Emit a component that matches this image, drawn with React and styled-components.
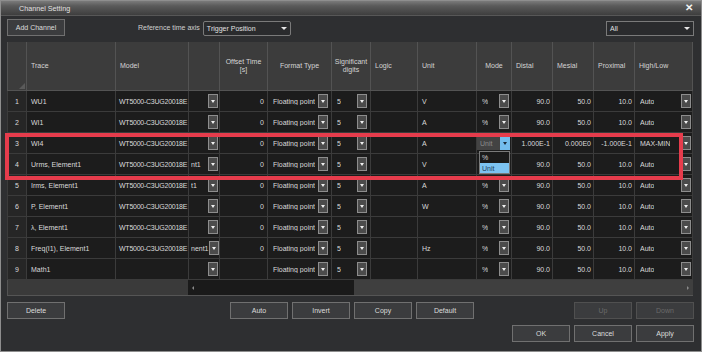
import React from 'react';
import styled, { createGlobalStyle } from 'styled-components';

const Global = createGlobalStyle`
  html, body { margin: 0; padding: 0; background: #2e2f31; }
  body { font-family: "Liberation Sans", Arial, sans-serif; }
  * { box-sizing: border-box; }
`;

const Window = styled.div`
  position: relative;
  width: 702px;
  height: 352px;
  border: 1px solid #8e8e8e;
  background: #2e2f31;
  color: #d9d9d9;
  font-size: 7px;
  display: flex;
  flex-direction: column;
  overflow: hidden;
`;

const TitleBar = styled.div`
  height: 15px;
  border-bottom: 1px solid #575757;
  background: linear-gradient(#7a7a7a, #5a5a5a 35%, #3e3e3e);
  display: flex;
  align-items: center;
  padding: 0 8px 0 18px;
  font-size: 7.2px;
  color: #e2e2e2;
`;

const Title = styled.span`
  flex: 1;
`;

const Close = styled.span`
  font-size: 10px;
  font-weight: bold;
  color: #f2f2f2;
  line-height: 1;
`;

const Toolbar = styled.div`
  height: 26px;
  display: flex;
  align-items: flex-start;
  padding: 3px 7px 0 6px;
`;

const Button = styled.button`
  width: 58px;
  height: 17px;
  padding: 0;
  margin: 0;
  font-family: inherit;
  font-size: 7px;
  background: #3b3c3e;
  color: ${p => (p.disabled ? '#6a6a6a' : '#dcdcdc')};
  border: 1px solid ${p => (p.disabled ? '#505050' : '#707070')};
  margin-left: ${p => p.$ml || 0}px;
`;

const Label = styled.span`
  margin-left: ${p => p.$ml || 0}px;
  height: 17px;
  display: flex;
  align-items: center;
  margin-right: 3px;
  color: #cfcfcf;
`;

const Select = styled.div`
  width: 88px;
  height: 15px;
  margin-top: 2px;
  margin-left: ${p => (p.$auto ? 'auto' : '0')};
  border: 1px solid #7a7a7a;
  border-radius: ${p => p.$r || 0}px;
  background: #2a2b2d;
  display: flex;
  align-items: center;
  justify-content: space-between;
  padding: 0 3px 0 3px;
  color: #e0e0e0;
`;

const Caret = styled.span`
  width: 0;
  height: 0;
  border-left: 3px solid transparent;
  border-right: 3px solid transparent;
  border-top: 3.5px solid ${p => p.$c || '#e8e8e8'};
`;

const Body = styled.div`
  padding: 0 7px 0 6px;
  display: flex;
  flex-direction: column;
`;

const Table = styled.div`
  width: 686px;
  border-bottom: 1px solid #555;
`;

const COLS = '20px 89px 73px 31px 48px 64px 39px 47px 59px 35px 41px 41px 41px 58px';

const HeaderRow = styled.div`
  display: grid;
  grid-template-columns: ${COLS};
  height: 49px;
`;

const HCell = styled.div`
  position: relative;
  background: #3c3c3c;
  border-right: 1px solid #535353;
  border-bottom: 1px solid #535353;
  border-left: ${p => (p.$first ? '1px solid #535353' : 'none')};
  display: flex;
  align-items: center;
  justify-content: ${p => (p.$center ? 'center' : 'flex-start')};
  text-align: ${p => (p.$center ? 'center' : 'left')};
  padding-left: ${p => (p.$center ? 0 : 4)}px;
  line-height: 8.5px;
  color: #d4d4d4;
  white-space: pre;
`;

const Corner = styled.svg`
  position: absolute;
  right: 1px;
  bottom: 1px;
`;

const Row = styled.div`
  display: grid;
  grid-template-columns: ${COLS};
  height: 21px;
`;

const Cell = styled.div`
  background: ${p => (p.$num ? '#262626' : '#1c1c1c')};
  border-right: 1px solid #3b3b3b;
  border-bottom: 1px solid #3b3b3b;
  border-left: ${p => (p.$num ? '1px solid #3b3b3b' : 'none')};
  display: flex;
  align-items: center;
  justify-content: ${p =>
    p.$align === 'right' ? 'flex-end' : p.$align === 'center' ? 'center' : 'flex-start'};
  padding: 0 ${p => (p.$pr != null ? p.$pr : 3)}px 0 ${p => (p.$pl != null ? p.$pl : 4)}px;
  white-space: nowrap;
  overflow: hidden;
  color: #dadada;
  letter-spacing: ${p => (p.$tight ? '-0.25px' : 'normal')};
`;

const CellText = styled.span`
  flex: ${p => (p.$grow ? 1 : 'none')};
  overflow: hidden;
`;

const DropBtn = styled.span`
  flex: none;
  width: 10px;
  height: 14px;
  background: ${p => (p.$active ? '#74bdee' : '#4b4b4b')};
  border: 1px solid ${p => (p.$active ? '#74bdee' : '#8d8d8d')};
  display: flex;
  align-items: center;
  justify-content: center;
  margin-left: auto;
`;

const BtnCaret = styled.span`
  width: 0;
  height: 0;
  border-left: 2.5px solid transparent;
  border-right: 2.5px solid transparent;
  border-top: 3px solid ${p => p.$c || '#f0f0f0'};
`;

const OpenSelect = styled.div`
  flex: 1;
  height: 14px;
  display: flex;
  background: #434343;
  align-items: center;
`;

const OpenSelectText = styled.span`
  flex: 1;
  padding-left: 3px;
  color: #8c8c8c;
`;

const Scrollbar = styled.div`
  display: flex;
  height: 15px;
`;

const Frozen = styled.div`
  width: 181px;
  background: #3a3a3a;
  border-left: 1px solid #535353;
`;

const Track = styled.div`
  flex: 1;
  display: flex;
  align-items: center;
  background: #1a1a1a;
`;

const ArrowBtn = styled.div`
  width: 10px;
  height: 15px;
  display: flex;
  align-items: center;
  justify-content: center;
  background: ${p => (p.$light ? '#3f3f3f' : '#1a1a1a')};
`;

const ArrowTri = styled.span`
  width: 0;
  height: 0;
  border-top: 2px solid transparent;
  border-bottom: 2px solid transparent;
  ${p =>
    p.$dir === 'left'
      ? 'border-right: 2.5px solid #8a8a8a;'
      : 'border-left: 2.5px solid #8a8a8a;'}
`;

const Thumb = styled.div`
  height: 15px;
  margin-left: 156px;
  flex: 1;
  background: #3f3f3f;
`;

const ButtonRow = styled.div`
  display: flex;
  align-items: center;
  margin-top: 6px;
`;

const Group = styled.div`
  display: flex;
  gap: ${p => p.$gap || 4}px;
  margin-left: ${p => (p.$auto ? 'auto' : `${p.$ml || 0}px`)};
`;

const Highlight = styled.div`
  position: absolute;
  left: 4px;
  top: 132px;
  width: 678px;
  height: 47px;
  border: 4px solid #e63c4c;
  pointer-events: none;
`;

const DropList = styled.div`
  position: absolute;
  left: 478px;
  top: 150px;
  width: 31px;
  height: 23px;
  border: 1px solid #7a7a7a;
  background: #1b1b1b;
  display: flex;
  flex-direction: column;
`;

const DropItem = styled.div`
  height: 10px;
  display: flex;
  align-items: center;
  padding-left: 2px;
  background: ${p => (p.$sel ? '#7cc3f1' : 'transparent')};
  color: ${p => (p.$sel ? '#1d3d5c' : '#d4d4d4')};
  margin-top: ${p => (p.$sel ? 1 : 0)}px;
`;

const rows = [
  { n: 1, trace: 'WU1', model: true, frag: '', off: '0', unit: 'V' },
  { n: 2, trace: 'WI1', model: true, frag: '', off: '0', unit: 'A' },
  { n: 3, trace: 'WI4', model: true, frag: '', off: '0', unit: 'A', special: true },
  { n: 4, trace: 'Urms, Element1', model: true, frag: 'nt1', off: '0', unit: 'V', covered: true },
  { n: 5, trace: 'Irms, Element1', model: true, frag: 't1', off: '0', unit: 'A' },
  { n: 6, trace: 'P, Element1', model: true, frag: '', off: '0', unit: 'W' },
  { n: 7, trace: 'λ, Element1', model: true, frag: '', off: '0', unit: '' },
  { n: 8, trace: 'Freq(I1), Element1', model: true, frag: 'nent1', off: '0', unit: 'Hz' },
  { n: 9, trace: 'Math1', model: false, frag: '', off: '', unit: '' },
];

const Drop = ({ active }) => (
  <DropBtn $active={active}>
    <BtnCaret $c={active ? '#1a2a3a' : '#f0f0f0'} />
  </DropBtn>
);

function ModeCell({ row }) {
  if (row.special) {
    return (
      <Cell $pl={0} $pr={1}>
        <OpenSelect>
          <OpenSelectText>Unit</OpenSelectText>
          <Drop active />
        </OpenSelect>
      </Cell>
    );
  }
  if (row.covered) {
    return <Cell />;
  }
  return (
    <Cell $pl={5} $pr={2}>
      <CellText>%</CellText>
      <Drop />
    </Cell>
  );
}

export default function App() {
  return (
    <>
      <Global />
      <Window>
        <TitleBar>
          <Title>Channel Setting</Title>
          <Close>✕</Close>
        </TitleBar>
        <Toolbar>
          <Button>Add Channel</Button>
          <Label $ml={73}>Reference time axis</Label>
          <Select $r={2}>
            <span>Trigger Position</span>
            <Caret />
          </Select>
          <Select $auto>
            <span>All</span>
            <Caret />
          </Select>
        </Toolbar>
        <Body>
          <Table>
            <HeaderRow>
              <HCell $first>
                <Corner width="6" height="6" viewBox="0 0 6 6">
                  <polygon points="6,0 6,6 0,6" fill="#5a5a5a" />
                </Corner>
              </HCell>
              <HCell>Trace</HCell>
              <HCell>Model</HCell>
              <HCell />
              <HCell $center>{'Offset Time\n[s]'}</HCell>
              <HCell $center>Format Type</HCell>
              <HCell $center>{'Significant\ndigits'}</HCell>
              <HCell>Logic</HCell>
              <HCell>Unit</HCell>
              <HCell $center>Mode</HCell>
              <HCell>Distal</HCell>
              <HCell>Mesial</HCell>
              <HCell>Proximal</HCell>
              <HCell>High/Low</HCell>
            </HeaderRow>
            {rows.map(r => (
              <Row key={r.n}>
                <Cell $num $align="center" $pl={0} $pr={0}>{r.n}</Cell>
                <Cell>{r.trace}</Cell>
                <Cell $pl={3} $pr={0} $tight>{r.model ? 'WT5000-C3UG20018E' : ''}</Cell>
                <Cell $pl={2} $pr={1}>
                  <CellText>{r.frag}</CellText>
                  <Drop />
                </Cell>
                <Cell $align="right" $pr={3}>{r.off}</Cell>
                <Cell $pl={5} $pr={3}>
                  <CellText>Floating point</CellText>
                  <Drop />
                </Cell>
                <Cell $pl={5} $pr={3}>
                  <CellText>5</CellText>
                  <Drop />
                </Cell>
                <Cell />
                <Cell>{r.unit}</Cell>
                <ModeCell row={r} />
                <Cell $align="right" $pr={2}>{r.special ? '1.000E-1' : '90.0'}</Cell>
                <Cell $align="right" $pr={2}>{r.special ? '0.000E0' : '50.0'}</Cell>
                <Cell $align="right" $pr={2}>{r.special ? '-1.000E-1' : '10.0'}</Cell>
                <Cell $pl={5} $pr={1}>
                  <CellText>{r.special ? 'MAX-MIN' : 'Auto'}</CellText>
                  <Drop />
                </Cell>
              </Row>
            ))}
            <Scrollbar>
              <Frozen />
              <Track>
                <ArrowBtn>
                  <ArrowTri $dir="left" />
                </ArrowBtn>
                <Thumb />
                <ArrowBtn $light>
                  <ArrowTri $dir="right" />
                </ArrowBtn>
              </Track>
            </Scrollbar>
          </Table>
          <ButtonRow>
            <Button>Delete</Button>
            <Group $ml={165} $gap={4}>
              <Button>Auto</Button>
              <Button>Invert</Button>
              <Button>Copy</Button>
              <Button>Default</Button>
            </Group>
            <Group $auto>
              <Button disabled>Up</Button>
              <Button disabled>Down</Button>
            </Group>
          </ButtonRow>
          <ButtonRow>
            <Group $auto>
              <Button>OK</Button>
              <Button>Cancel</Button>
              <Button>Apply</Button>
            </Group>
          </ButtonRow>
        </Body>
        <Highlight />
        <DropList>
          <DropItem>%</DropItem>
          <DropItem $sel>Unit</DropItem>
        </DropList>
      </Window>
    </>
  );
}
